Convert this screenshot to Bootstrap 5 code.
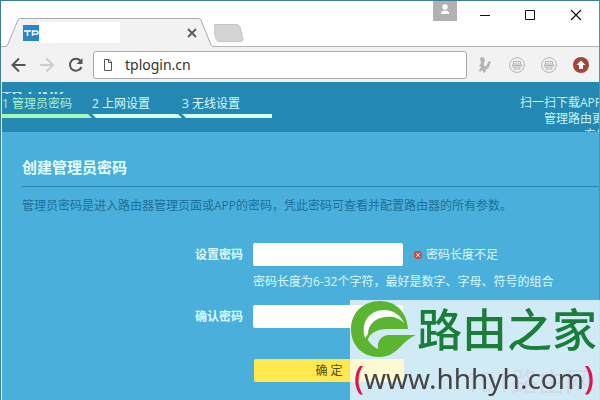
<!DOCTYPE html>
<html lang="zh-CN">
<head>
<meta charset="utf-8">
<meta name="viewport" content="width=device-width, initial-scale=1">
<title>创建管理员密码</title>
<link href="https://cdn.jsdelivr.net/npm/bootstrap@5.3.0/dist/css/bootstrap.min.css" rel="stylesheet">
<style>
body { font-family: "Open Sans", "Noto Sans CJK SC", sans-serif; font-size: 12px; line-height: 16px; background: #4bafdb; }
.browser { border: 1px solid #3c7f92; border-bottom: 0; border-right-color: #4c95a5; }
.viewport { border-left: 1px solid #d2f2fa; }
.tabstrip { height: 46px; background: #fff; border-bottom: 1px solid #b4b4b4; }
.page-tab { width: 212px; height: 29px; margin: 0 0 -1px 1px; padding: 0 17px 0 21px; }
.tab-shape { position: absolute; left: 0; top: 0; }
.page-name { width: 81px; height: 21px; background: #fff; }
.plain-btn { background: none; border: 0; padding: 0; line-height: 0; display: block; }
.profile { width: 24px; height: 20px; background: #b1b1b1; margin-right: 20px; }
.toolbar-row { height: 35px; background: #f2f2f2; padding: 0 10px; }
.nav-btns { gap: 14px; }
.omnibox { height: 28px; border: 1px solid #a6a6a6; border-radius: 3px; background: #fff; padding: 0 9px; margin-left: 10px; margin-right: 10px; }
.omnibox input { border: 0; outline: 0; background: none; font-size: 14px; font-family: "Noto Sans", sans-serif; line-height: 20px; color: #333; padding: 0; min-width: 0; }
.site-head { height: 50px; background: #2488b3; color: #d9fbff; padding-top: 10px; overflow: hidden; }
.brand-clip { height: 2px; margin-bottom: 1px; overflow: hidden; font: bold 16px/18px "Liberation Sans", sans-serif; color: #b4e8f4; }
.brand-clip span { display: block; margin-top: -3px; }
.wizard-step { width: 90px; padding-top: 1px; color: inherit; text-decoration: none; }
.wizard-step::after { content: ""; display: block; height: 4px; margin-top: 2px; background: #d4fdff; clip-path: polygon(0 0, 86px 0, 90px 100%, 4px 100%); }
.wizard-step:first-child::after { clip-path: polygon(0 0, 86px 0, 90px 100%, 0 100%); background: #a4f8b8; }
.wizard-step:last-child::after { clip-path: polygon(0 0, 100% 0, 100% 100%, 4px 100%); }
.wizard-step.active { color: #a8f4c8; }
.app-note { width: 79px; margin-top: 3px; color: #c4f5fa; }
.setup { padding: 24px 0 0 20px; color: #d9fbff; }
.setup h1 { font-size: 15px; line-height: 22px; font-weight: 700; padding-bottom: 8px; margin-bottom: 11px; border-bottom: 1px solid #2487b5; color: #e5fcff; }
.intro { color: #1b6f9c; margin-bottom: 29px; }
.field-label { width: 222px; padding-right: 1px; text-align: right; font-weight: 700; margin-right: 9px; }
.field-box { width: 150px; height: 23px; border: 0; border-radius: 2px; background: #fff; padding: 0 6px; }
.hint { margin: 8px 0 15px 231px; }
.submit { width: 150px; height: 23px; margin: 31px 0 0 232px; border: 0; border-radius: 2px; background: #ffe74e; color: #554a1a; line-height: 23px; }
.site-stamp { position: fixed; right: 0; bottom: 0; width: 250px; height: 100px; background: rgba(255,255,255,.74); overflow: hidden; }
.stamp-name { font-size: 45px; line-height: 56px; font-weight: 500; color: #1b7d3a; font-family: "Noto Sans CJK SC", sans-serif; }
.stamp-url { font: 28px/40px "Noto Sans", sans-serif; color: #444; padding-left: 4px; }
.stamp-url b { font-weight: 500; font-size: 32px; line-height: 36px; color: #e2144b; }
.stamp-ghost { position: absolute; right: 8px; bottom: 0; font-size: 27px; line-height: 36px; color: #d3d8ec; }
</style>
<script src="https://cdn.jsdelivr.net/npm/bootstrap@5.3.0/dist/js/bootstrap.bundle.min.js"></script>
</head>
<body>
<div class="browser min-vh-100 d-flex flex-column">
  <header>
    <div class="tabstrip d-flex align-items-start">
      <div class="page-tab position-relative d-flex align-items-center align-self-end">
        <svg class="tab-shape" width="212" height="29" aria-hidden="true"><path d="M0 28.500H4Q5 28 6 26L16 2Q17 .5 19 .5H196Q198 .5 199 2L209 27Q210 28.500 212 28.500V29H0Z" fill="#f2f2f2"/><path d="M0 28.500H4Q5 28 6 26L16 2Q17 .5 19 .5H196Q198 .5 199 2L209 27Q210 28.500 212 28.500" fill="none" stroke="#aaa"/></svg>
        <svg class="position-relative" width="16" height="16" aria-label="TP"><path d="M0 0H16V16H0Z" fill="#2a86c5"/><path d="M1 6H8M4.500 6V11M9.500 11V6H13Q15 6 15 7.700T13 9.300H10" fill="none" stroke="#fff" stroke-width="1.500"/></svg>
        <div class="page-name position-relative"></div>
        <button class="plain-btn position-relative ms-auto" type="button" aria-label="关闭标签页"><svg width="10" height="10"><path d="M1 1L9 9M9 1L1 9" stroke="#5a5a5a" stroke-width="1.800"/></svg></button>
      </div>
      <button class="plain-btn align-self-end mb-1" type="button" aria-label="新标签页"><svg width="34" height="18"><path d="M2 .5H25Q27 .5 28 3L31 15Q31 17.500 29 17.500H7Q5 17.500 4 15L.5 3Q0 .5 2 .5Z" transform="translate(-2)" fill="#d4d4d4" stroke="#c6c6c6"/></svg></button>
      <div class="d-flex ms-auto">
        <button class="plain-btn profile" type="button" aria-label="用户"><svg width="24" height="20"><circle cx="12" cy="6" r="2.700" fill="#fff"/><path d="M8 13V12Q8 9.500 12 9.500T16 12V13Z" fill="#fff"/></svg></button>
        <div class="d-flex pt-2 me-3">
          <button class="plain-btn me-4" type="button" aria-label="最小化"><svg width="20" height="12"><path d="M3 6.500H13" stroke="#111"/></svg></button>
          <button class="plain-btn me-4" type="button" aria-label="最大化"><svg width="22" height="12"><path d="M4.500 1.500H13.500V10.500H4.500Z" fill="none" stroke="#111"/></svg></button>
          <button class="plain-btn" type="button" aria-label="关闭"><svg width="16" height="12"><path d="M4 1L14 11M14 1L4 11" stroke="#111" stroke-width="1.200"/></svg></button>
        </div>
      </div>
    </div>
    <div class="toolbar-row d-flex align-items-center">
      <div class="nav-btns d-flex">
        <button class="plain-btn" type="button" aria-label="后退"><svg width="15" height="16"><path d="M14.500 8H2M8 1.500L1.500 8L8 14.500" fill="none" stroke="#555" stroke-width="2"/></svg></button>
        <button class="plain-btn" type="button" aria-label="前进"><svg width="14" height="16"><path d="M0 8H12.500M6.500 1.500L13 8L6.500 14.500" fill="none" stroke="#ccc" stroke-width="2"/></svg></button>
        <button class="plain-btn" type="button" aria-label="刷新"><svg width="15" height="16"><path d="M12.500 3.800A6 6 0 1 0 13.500 10" fill="none" stroke="#555" stroke-width="2"/><path d="M14.500 1V7H8.500Z" fill="#555"/></svg></button>
      </div>
      <div class="omnibox d-flex align-items-center flex-grow-1">
        <svg width="10" height="12" aria-hidden="true"><path d="M1.500 .5H6L8.500 3V11.500H1.500ZM5.500 .5V3.500H8.500" fill="none" stroke="#555"/></svg>
        <input class="ms-2 ps-1 flex-grow-1" type="text" value="tplogin.cn" aria-label="地址栏">
      </div>
      <div class="d-flex gap-3">
        <button class="plain-btn" type="button" aria-label="扩展"><svg width="16" height="16"><path d="M3 1Q5 -1 7 1Q9 3 7 6L7 9L9 9L12 4L14 5L11 12L9 12L9 14L7 16L5 13L3 15L2 13L4 10L2 9L4 6Z" fill="#b5b5b5"/></svg></button>
        <button class="plain-btn" type="button" aria-label="工具一"><svg width="16" height="16"><g fill="none" stroke="#b5b5b5"><circle cx="8" cy="8" r="7.400"/><path d="M4.500 4.500H11.500V7H4.500ZM3 8.500H13M5 10H11V12H5ZM4 7L3 10M12 7L13 10"/></g></svg></button>
        <button class="plain-btn" type="button" aria-label="工具二"><svg width="16" height="16"><g fill="none" stroke="#b5b5b5"><circle cx="8" cy="8" r="7.400"/><path d="M4.500 4.500H11.500V7H4.500ZM3 8.500H13M5 10H11V12H5ZM4 7L3 10M12 7L13 10"/></g></svg></button>
        <button class="plain-btn" type="button" aria-label="更新"><svg width="16" height="16"><circle cx="8" cy="8" r="8" fill="#a4443a"/><path d="M8 3.500L12.500 8H10V12H6V8H3.500Z" fill="#fff"/></svg></button>
      </div>
    </div>
  </header>

  <div class="viewport flex-grow-1">
    <div class="site-head d-flex justify-content-between">
      <div>
        <div class="brand-clip"><span>TP-LINK</span></div>
        <nav class="d-flex" aria-label="设置步骤">
          <a class="wizard-step active" href="#">1 管理员密码</a>
          <a class="wizard-step" href="#">2 上网设置</a>
          <a class="wizard-step" href="#">3 无线设置</a>
        </nav>
      </div>
      <div class="app-note text-nowrap">
        <div>扫一扫下载APP</div>
        <div class="ps-4">管理路由更</div>
        <div class="ps-5"><span class="ps-3">方便</span></div>
      </div>
    </div>

    <main class="setup">
      <h1>创建管理员密码</h1>
      <p class="intro">管理员密码是进入路由器管理页面或APP的密码，凭此密码可查看并配置路由器的所有参数。</p>
      <form>
        <div class="d-flex align-items-center">
          <label class="field-label" for="pw">设置密码</label>
          <input class="field-box" id="pw" type="password">
          <svg class="ms-2 me-1" width="11" height="12" aria-hidden="true"><path d="M4 2H9L11 4V8L9 10H5L3 8V4Z" fill="#c05347"/><path d="M5 4L9 8M9 4L5 8" stroke="#fbd7cf"/></svg>
          <span>密码长度不足</span>
        </div>
        <div class="hint">密码长度为6-32个字符，最好是数字、字母、符号的组合</div>
        <div class="d-flex align-items-center">
          <label class="field-label" for="pw2">确认密码</label>
          <input class="field-box" id="pw2" type="password">
        </div>
        <button class="submit d-block p-0" type="submit">确 定</button>
      </form>
    </main>
  </div>
</div>

<aside class="site-stamp">
  <div class="stamp-ghost">191路由网</div>
  <div class="position-relative d-flex align-items-start">
    <svg class="flex-shrink-0" width="67" height="58" aria-hidden="true"><path d="M58 29C57 12 46 1 30 1C13 1 1 13 1 29C1 46 13 57 29 57C48 57 51 41 66 35H38C31 36 27 41 28 49C20 45 17 39 18 39C22 30 31 29 40 29Z" fill="#5cb531"/><path d="M15 38C10 22 20 10 34 10C44 10 51 16 54 23C48 17 42 16 35 17C25 18 18 25 18 34Z" fill="#fff"/></svg>
    <div class="stamp-name text-nowrap">路由之家</div>
  </div>
  <div class="stamp-url position-relative text-nowrap"><b>(</b>www.hhhyh.com<b>)</b></div>
</aside>
</body>
</html>
